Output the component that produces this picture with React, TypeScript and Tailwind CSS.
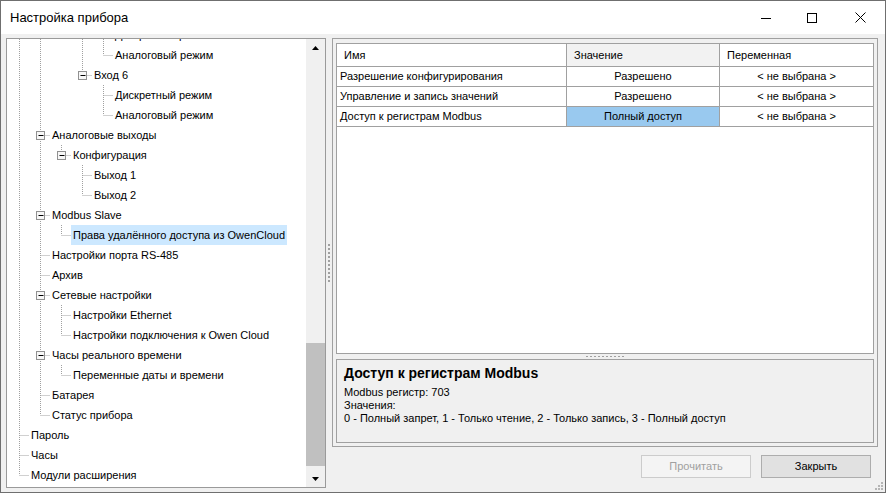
import React from 'react';

type Node = { t: string; lvl: number; anc: number[]; box?: boolean; last?: boolean; sel?: boolean };

const NODES: Node[] = [
  { t: 'Дискретный режим', lvl: 4, anc: [0, 1, 3] },
  { t: 'Аналоговый режим', lvl: 4, anc: [0, 1, 3], last: true },
  { t: 'Вход 6', lvl: 3, anc: [0, 1], box: true, last: true },
  { t: 'Дискретный режим', lvl: 4, anc: [0, 1] },
  { t: 'Аналоговый режим', lvl: 4, anc: [0, 1], last: true },
  { t: 'Аналоговые выходы', lvl: 1, anc: [0], box: true },
  { t: 'Конфигурация', lvl: 2, anc: [0, 1], box: true, last: true },
  { t: 'Выход 1', lvl: 3, anc: [0, 1] },
  { t: 'Выход 2', lvl: 3, anc: [0, 1], last: true },
  { t: 'Modbus Slave', lvl: 1, anc: [0], box: true },
  { t: 'Права удалённого доступа из OwenCloud', lvl: 2, anc: [0, 1], last: true, sel: true },
  { t: 'Настройки порта RS-485', lvl: 1, anc: [0] },
  { t: 'Архив', lvl: 1, anc: [0] },
  { t: 'Сетевые настройки', lvl: 1, anc: [0], box: true },
  { t: 'Настройки Ethernet', lvl: 2, anc: [0, 1] },
  { t: 'Настройки подключения к Owen Cloud', lvl: 2, anc: [0, 1], last: true },
  { t: 'Часы реального времени', lvl: 1, anc: [0], box: true },
  { t: 'Переменные даты и времени', lvl: 2, anc: [0, 1], last: true },
  { t: 'Батарея', lvl: 1, anc: [0] },
  { t: 'Статус прибора', lvl: 1, anc: [0], last: true },
  { t: 'Пароль', lvl: 0, anc: [] },
  { t: 'Часы', lvl: 0, anc: [] },
  { t: 'Модули расширения', lvl: 0, anc: [], last: true },
];

const lx = (l: number) => 12.5 + 21 * l;
const DOT = { stroke: '#a0a0a0', strokeWidth: 1, strokeDasharray: '1 1' };

function TreeRow({ n }: { n: Node }) {
  const x = lx(n.lvl);
  return (
    <div className="flex h-[20px] items-center whitespace-nowrap">
      <svg width={22 + 21 * n.lvl} height={20} className="shrink-0">
        {n.anc.map((l) => (
          <line key={l} x1={lx(l)} x2={lx(l)} y1={0} y2={20} {...DOT} />
        ))}
        <line x1={x} x2={x} y1={0} y2={n.last ? 10 : 20} {...DOT} />
        <line x1={x} x2={x + 10} y1={10.5} y2={10.5} {...DOT} />
        {n.box && (
          <g>
            <rect x={x - 4} y={6.5} width={8} height={8} fill="#f7f7f7" stroke="#919191" />
            <line x1={x - 2} x2={x + 3} y1={10.5} y2={10.5} stroke="#000" />
          </g>
        )}
      </svg>
      <span className={`px-[2px] leading-[20px] ${n.sel ? 'bg-[#cce8ff]' : ''}`}>{n.t}</span>
    </div>
  );
}

function Tri({ up }: { up?: boolean }) {
  return (
    <svg width="7" height="4" viewBox="0 0 7 4">
      <polygon points={up ? '3.5,0 7,4 0,4' : '0,0 7,0 3.5,4'} fill="#000" />
    </svg>
  );
}

const ROWS = [
  ['Разрешение конфигурирования', 'Разрешено', '< не выбрана >'],
  ['Управление и запись значений', 'Разрешено', '< не выбрана >'],
  ['Доступ к регистрам Modbus', 'Полный доступ', '< не выбрана >'],
];

export default function App() {
  return (
    <div className="w-[886px] h-[493px] border border-[#6f6f6f] bg-[#f0f0f0] flex flex-col font-['Liberation_Sans',Arial,sans-serif] text-[11px] text-black overflow-hidden">
      {/* Title bar */}
      <div className="h-[33px] bg-white flex items-center shrink-0">
        <span className="pl-[9px] text-[13px] flex-1">Настройка прибора</span>
        <div className="flex h-full">
          <div className="w-[46px] flex items-center justify-center">
            <svg width="10" height="10"><line x1="0" x2="10" y1="5.5" y2="5.5" stroke="#000" /></svg>
          </div>
          <div className="w-[46px] flex items-center justify-center">
            <svg width="10" height="10"><rect x="0.5" y="0.5" width="9" height="9" fill="none" stroke="#000" /></svg>
          </div>
          <div className="w-[50px] flex items-center justify-center">
            <svg width="11" height="11"><path d="M0.5 0.5L10.5 10.5M10.5 0.5L0.5 10.5" stroke="#000" /></svg>
          </div>
        </div>
      </div>

      {/* Body */}
      <div className="flex flex-1 min-h-0">
        {/* Tree */}
        <div className="ml-[5px] mt-[4px] w-[320px] h-[450px] border border-[#9a9a9a] bg-white flex shrink-0 overflow-hidden">
          <div className="flex-1 overflow-hidden">
            <div className="-mt-[14px]">
              {NODES.map((n, i) => (
                <TreeRow key={i} n={n} />
              ))}
            </div>
          </div>
          <div className="w-[19px] bg-[#f0f0f0] flex flex-col">
            <div className="h-[17px] flex items-center justify-center"><Tri up /></div>
            <div className="flex-1" />
            <div className="h-[123px] bg-[#c0c0c0]" />
            <div className="h-[4px]" />
            <div className="h-[17px] flex items-center justify-center"><Tri /></div>
          </div>
        </div>

        {/* Vertical splitter */}
        <div className="w-[6px] flex items-center justify-center">
          <div className="flex flex-col gap-[2px]">
            {Array.from({ length: 10 }).map((_, i) => (
              <div key={i} className="w-[2px] h-[2px] bg-[#a0a0a0]" />
            ))}
          </div>
        </div>

        {/* Right side */}
        <div className="w-[546px] mt-[4px] flex flex-col">
          <div className="h-[409px] border border-[#a0a0a0] p-[3px] pt-[4px] flex flex-col">
            {/* Grid */}
            <div className="flex-1 border border-[#a0a0a0] bg-white">
              <div className="flex h-[23px] border-b border-[#a0a0a0]">
                <div className="w-[230px] border-r border-[#a0a0a0] pl-[7px] flex items-center">Имя</div>
                <div className="w-[153px] border-r border-[#a0a0a0] pl-[7px] flex items-center bg-[#f2f2f2]">Значение</div>
                <div className="flex-1 pl-[7px] flex items-center">Переменная</div>
              </div>
              {ROWS.map((r, i) => (
                <div key={i} className="flex h-[20px] border-b border-[#a0a0a0]">
                  <div className="w-[230px] border-r border-[#a0a0a0] pl-[3px] flex items-center">{r[0]}</div>
                  <div className={`w-[153px] border-r border-[#a0a0a0] flex items-center justify-center ${i === 2 ? 'bg-[#99c9ef]' : ''}`}>{r[1]}</div>
                  <div className="flex-1 flex items-center justify-center">{r[2]}</div>
                </div>
              ))}
            </div>

            {/* Horizontal splitter */}
            <div className="h-[5px] flex items-center justify-center">
              <div className="flex gap-[2px]">
                {Array.from({ length: 10 }).map((_, i) => (
                  <div key={i} className="w-[2px] h-[1px] bg-[#a0a0a0]" />
                ))}
              </div>
            </div>

            {/* Details */}
            <div className="h-[84px] border border-[#a0a0a0] px-[7px] pt-[4px]">
              <div className="text-[14px] font-bold leading-[18px]">Доступ к регистрам Modbus</div>
              <div className="leading-[13px] mt-[4px]">Modbus регистр: 703</div>
              <div className="leading-[13px]">Значения:</div>
              <div className="leading-[13px]">0 - Полный запрет, 1 - Только чтение, 2 - Только запись, 3 - Полный доступ</div>
            </div>
          </div>

          {/* Buttons */}
          <div className="flex justify-end gap-[10px] mt-[8px] pr-[7px]">
            <div className="w-[110px] h-[23px] border border-[#cccccc] bg-[#f4f4f4] text-[#a0a0a0] flex items-center justify-center">Прочитать</div>
            <div className="w-[110px] h-[23px] border border-[#adadad] bg-[#e1e1e1] flex items-center justify-center">Закрыть</div>
          </div>
          <div className="flex-1 flex items-end justify-end -mr-[6px]">
            <svg width="9" height="9" className="mb-[1px]">
              <rect x="6" y="6" width="2" height="2" fill="#b5b5b5" />
              <rect x="3" y="6" width="2" height="2" fill="#b5b5b5" />
              <rect x="0" y="6" width="2" height="2" fill="#b5b5b5" />
              <rect x="6" y="3" width="2" height="2" fill="#b5b5b5" />
              <rect x="3" y="3" width="2" height="2" fill="#b5b5b5" />
              <rect x="6" y="0" width="2" height="2" fill="#b5b5b5" />
            </svg>
          </div>
        </div>
      </div>
    </div>
  );
}
